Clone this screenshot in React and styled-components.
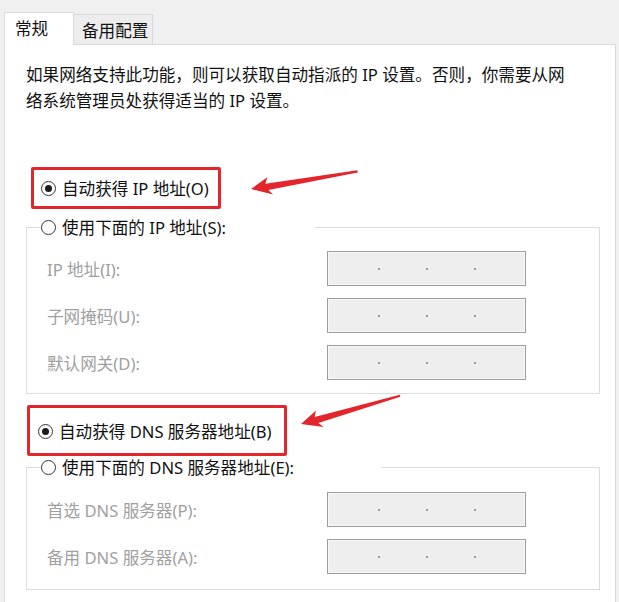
import React from 'react'
import styled, { createGlobalStyle } from 'styled-components'

const GlobalStyle = createGlobalStyle`
  html, body { margin: 0; padding: 0; background: #f0f0f0; }
  body { font-family: "Noto Sans", "Noto Sans CJK SC", sans-serif; }
`

const RED = '#e3262c'

const Window = styled.div`
  width: 619px;
  height: 602px;
  overflow: hidden;
  background: #f0f0f0;
  padding: 0 3px 0 4px;
  box-sizing: border-box;
  display: flex;
  flex-direction: column;
  font-size: 16.6px;
  color: #111;
`

const TabBar = styled.div`
  height: 44px;
  display: flex;
  align-items: flex-end;
  flex-shrink: 0;
`

const Tab = styled.div`
  box-sizing: border-box;
  width: ${p => p.w}px;
  height: ${p => (p.active ? 33 : 30)}px;
  padding: 3px 0 0 ${p => (p.active ? 10 : 8)}px;
  line-height: 26px;
  border: 1px solid #d9d9d9;
  border-bottom: none;
  background: ${p => (p.active ? '#fff' : '#ededed')};
  margin-bottom: ${p => (p.active ? -1 : 0)}px;
  margin-left: ${p => (p.active ? 0 : -1)}px;
  position: relative;
  z-index: ${p => (p.active ? 1 : 0)};
`

const Panel = styled.div`
  flex: 1;
  background: #fff;
  border: 1px solid #d9d9d9;
  border-bottom: none;
  padding: 17px 15px 0 21px;
`

const Intro = styled.p`
  margin: 0;
  line-height: 26px;
`

const RadioRow = styled.div`
  position: relative;
  display: flex;
  align-items: center;
  gap: 6px;
  height: 26px;
  margin-top: ${p => p.mt}px;
  padding-left: ${p => p.indent}px;
`

const Radio = styled.span`
  box-sizing: border-box;
  width: 15px;
  height: 15px;
  border-radius: 50%;
  border: 1px solid #333;
  background: #fff;
  display: flex;
  align-items: center;
  justify-content: center;
  flex-shrink: 0;

  &::after {
    content: '';
    display: ${p => (p.checked ? 'block' : 'none')};
    width: 7px;
    height: 7px;
    border-radius: 50%;
    background: #1a1a1a;
  }
`

const Frame = styled.div`
  position: absolute;
  left: ${p => p.x}px;
  top: ${p => p.y}px;
  width: ${p => p.w}px;
  height: ${p => p.h}px;
  box-sizing: border-box;
  border: 3px solid ${RED};
  border-radius: 2px;
  pointer-events: none;
`

const ArrowSvg = styled.svg`
  position: absolute;
  left: ${p => p.x}px;
  top: ${p => p.y}px;
  overflow: visible;
`

const Group = styled.fieldset`
  margin: ${p => p.mt}px 0 0 0;
  padding: 0 0 ${p => p.pb}px 0;
  border: 1px solid #dcdcdc;
  min-width: 0;
`

const Legend = styled.legend`
  margin-left: 14px;
  padding: 0;
  width: ${p => p.w}px;
`

const LegendRow = styled.div`
  display: flex;
  align-items: center;
  gap: 6px;
  height: 26px;
`

const Fields = styled.div`
  display: grid;
  grid-template-columns: 280px 199px;
  row-gap: 12px;
  padding: ${p => p.pt}px 0 0 20px;
  align-items: center;
`

const FieldLabel = styled.div`
  color: #a0a0a0;
`

const IpBox = styled.div`
  box-sizing: border-box;
  height: 35px;
  background: #eeeeee;
  border: 1px solid #9c9c9c;
  box-shadow: inset 0 0 0 1px #f8f8f8;
  display: flex;
  align-items: center;
  justify-content: center;
  gap: 46px;
`

const Dot = styled.span`
  width: 2px;
  height: 2px;
  border-radius: 50%;
  background: #7a7a7a;
`

function Arrow({ x, y, angle, length }) {
  const L = length
  return (
    <ArrowSvg x={x} y={y} width="1" height="1">
      <polygon
        transform={`rotate(${angle})`}
        fill={RED}
        points={`0,0 18,-9 15,-3 ${L},-1.8 ${L},0.4 17,3.6 21,9`}
      />
    </ArrowSvg>
  )
}

function IpField({ label }) {
  return (
    <>
      <FieldLabel>{label}</FieldLabel>
      <IpBox>
        <Dot />
        <Dot />
        <Dot />
      </IpBox>
    </>
  )
}

export default function App() {
  return (
    <Window>
      <GlobalStyle />
      <TabBar>
        <Tab active w={70}>常规</Tab>
        <Tab w={80}>备用配置</Tab>
      </TabBar>
      <Panel>
        <Intro>
          如果网络支持此功能，则可以获取自动指派的 IP 设置。否则，你需要从网
          <br />
          络系统管理员处获得适当的 IP 设置。
        </Intro>

        <RadioRow mt={61} indent={15}>
          <Radio checked />
          <span>自动获得 IP 地址(O)</span>
          <Frame x={5} y={-8} w={190} h={42} />
          <Arrow x={225} y={14} angle={-9} length={108} />
        </RadioRow>

        <Group mt={13} pb={13}>
          <Legend w={274}>
            <LegendRow>
              <Radio />
              <span>使用下面的 IP 地址(S):</span>
            </LegendRow>
          </Legend>
          <Fields pt={11}>
            <IpField label="IP 地址(I):" />
            <IpField label="子网掩码(U):" />
            <IpField label="默认网关(D):" />
          </Fields>
        </Group>

        <RadioRow mt={24} indent={12}>
          <Radio checked />
          <span>自动获得 DNS 服务器地址(B)</span>
          <Frame x={1} y={-13} w={260} h={51} />
          <Arrow x={275} y={6} angle={-15.5} length={103} />
        </RadioRow>

        <Group mt={10} pb={15}>
          <Legend w={340}>
            <LegendRow>
              <Radio />
              <span>使用下面的 DNS 服务器地址(E):</span>
            </LegendRow>
          </Legend>
          <Fields pt={12}>
            <IpField label="首选 DNS 服务器(P):" />
            <IpField label="备用 DNS 服务器(A):" />
          </Fields>
        </Group>
      </Panel>
    </Window>
  )
}
